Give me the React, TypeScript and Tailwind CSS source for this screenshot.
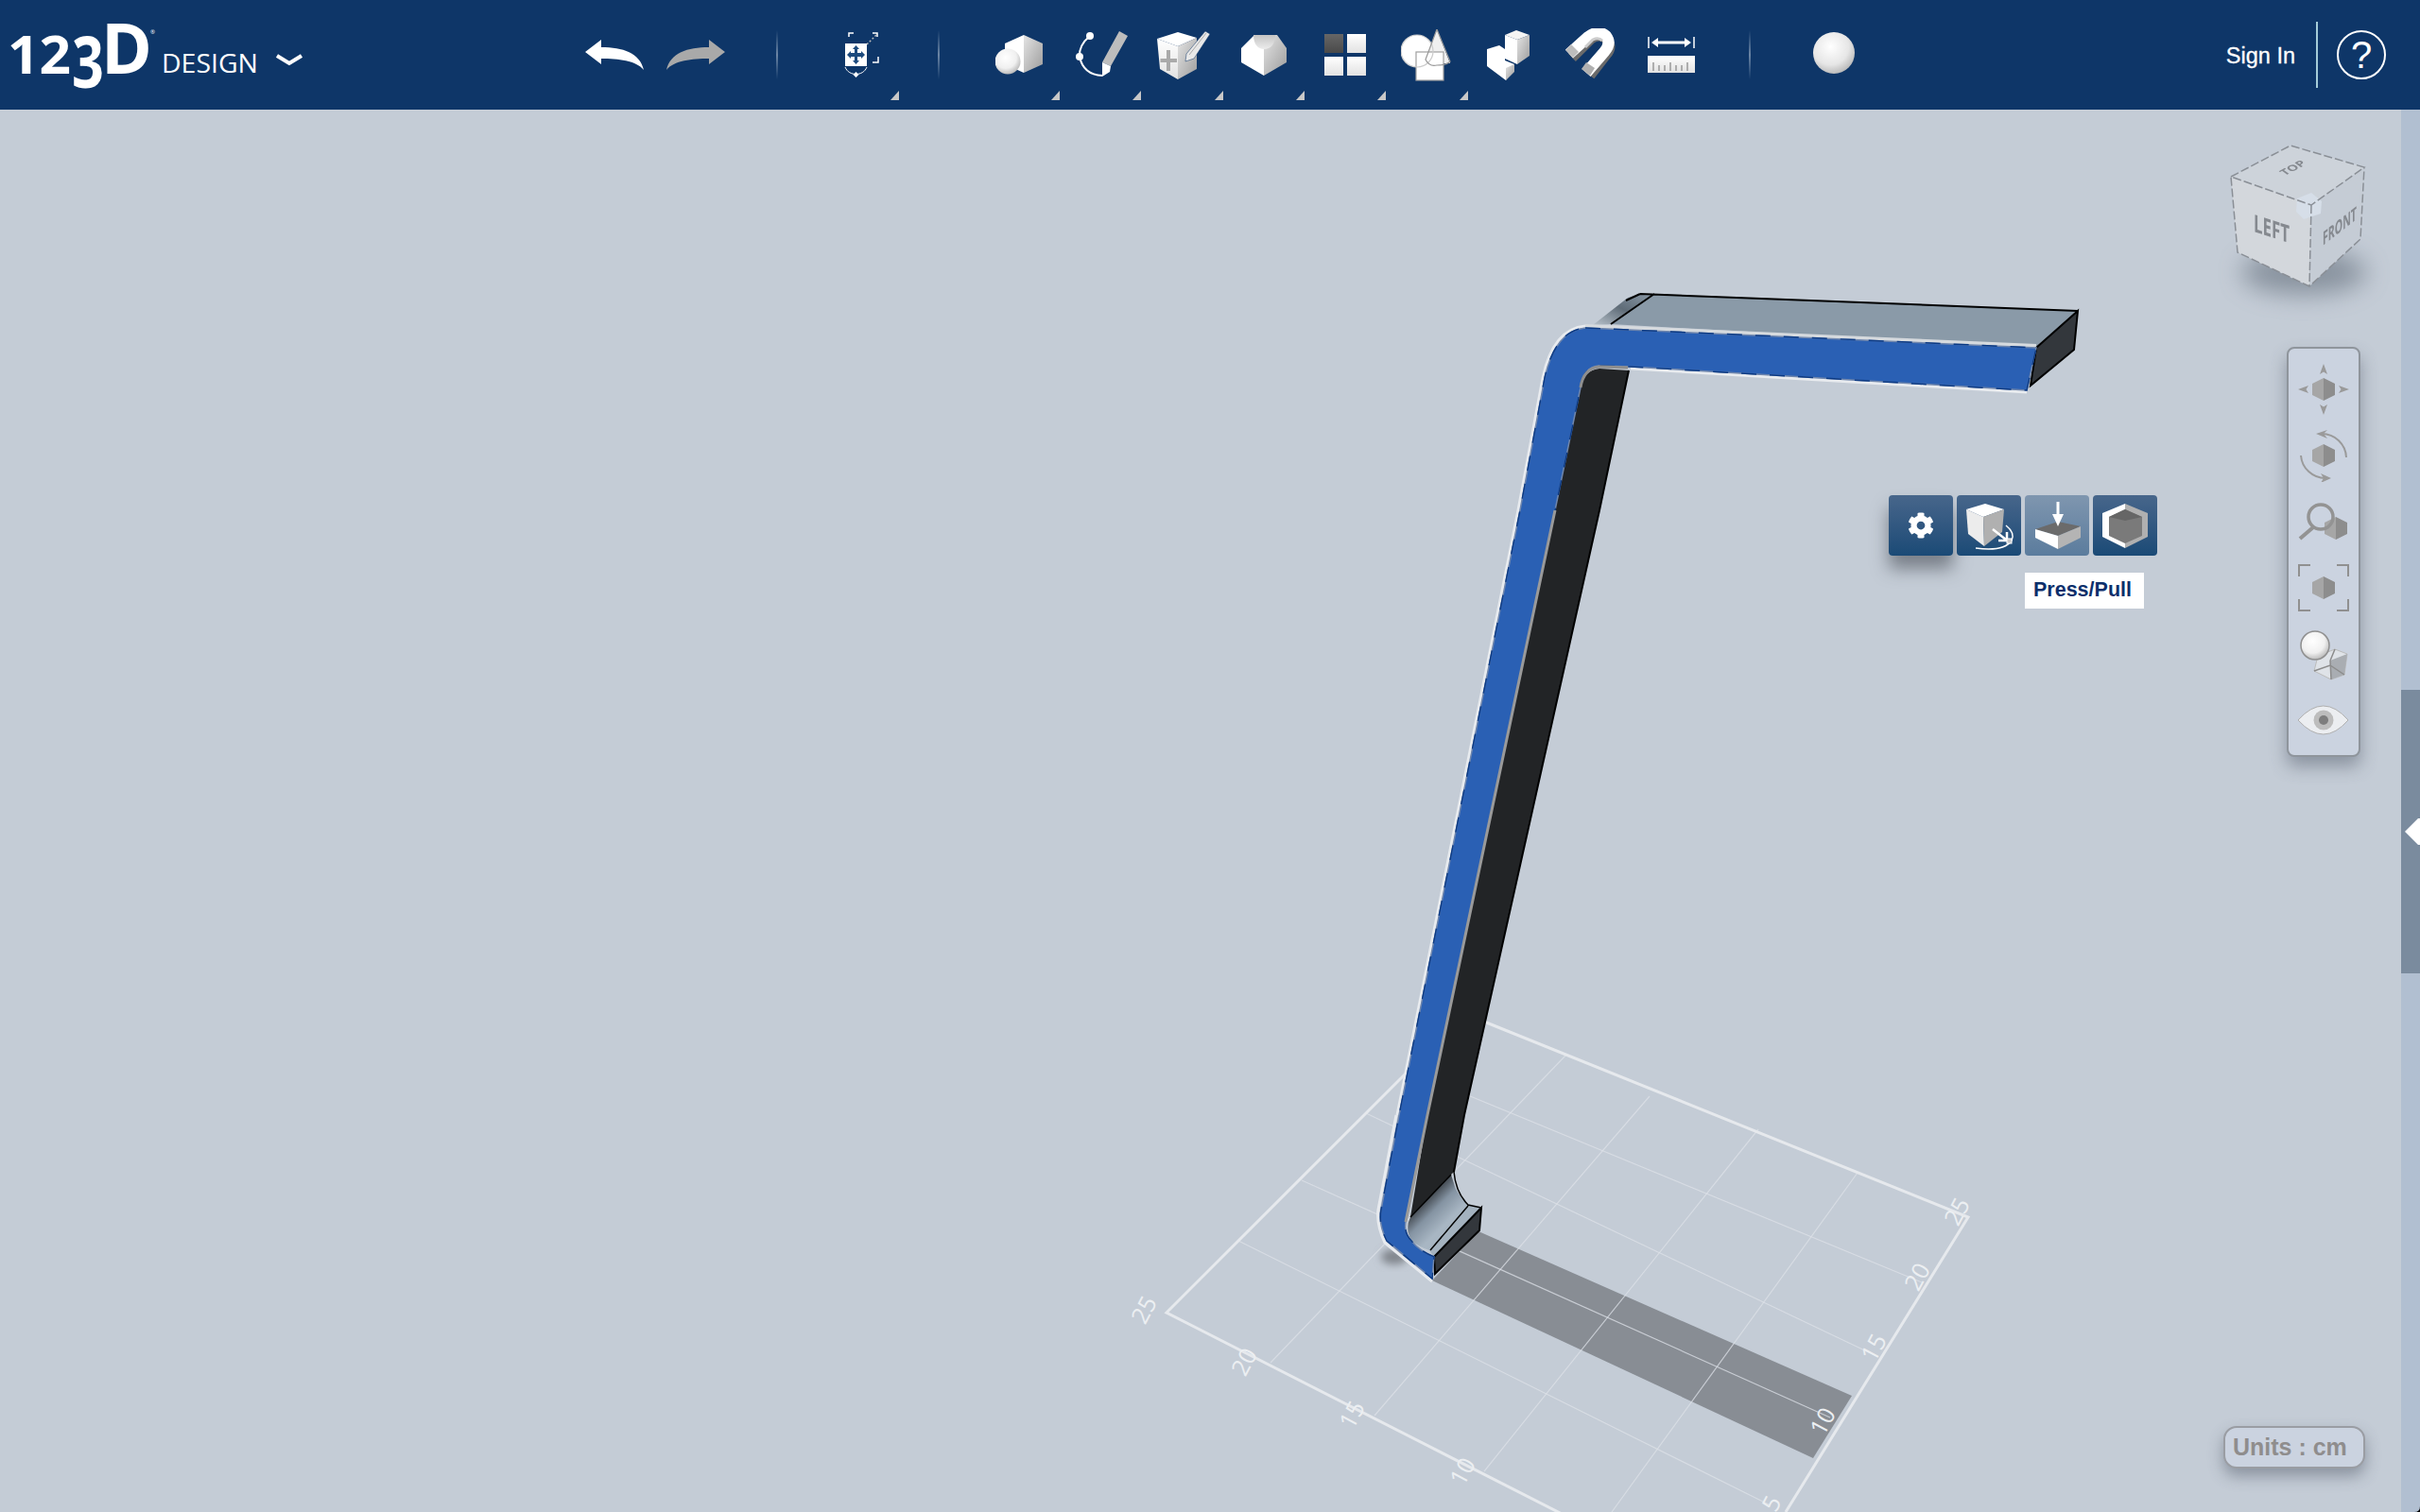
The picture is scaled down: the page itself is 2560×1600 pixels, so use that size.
import React from 'react';
import {FaCog} from 'react-icons/fa';

const SANS = "font-['Liberation_Sans',Arial,sans-serif]";

const GradientDefs = () => (
    <svg className="absolute w-0 h-0">
        <defs>
            <linearGradient id="faceGray" x1="0" y1="0" x2="1" y2="1">
                <stop offset="0" stopColor="#e4e4e4"/>
                <stop offset="1" stopColor="#9c9c9c"/>
            </linearGradient>
            <linearGradient id="faceWhite" x1="0" y1="0" x2="0" y2="1">
                <stop offset="0" stopColor="#ffffff"/>
                <stop offset="1" stopColor="#e2e2e2"/>
            </linearGradient>
            <linearGradient id="faceDark" x1="0" y1="0" x2="0" y2="1">
                <stop offset="0" stopColor="#666666"/>
                <stop offset="1" stopColor="#4a4a4a"/>
            </linearGradient>
            <radialGradient id="ball" cx="0.42" cy="0.35" r="0.7">
                <stop offset="0" stopColor="#ffffff"/>
                <stop offset="0.6" stopColor="#f0f0f0"/>
                <stop offset="1" stopColor="#b0b0b0"/>
            </radialGradient>
            <linearGradient id="scoop" x1="0" y1="0" x2="0" y2="1">
                <stop offset="0" stopColor="#c4c4c4"/>
                <stop offset="1" stopColor="#ececec"/>
            </linearGradient>
            <linearGradient id="bevelTop" x1="0" y1="1" x2="1" y2="0">
                <stop offset="0" stopColor="#b9c3cc"/>
                <stop offset="0.5" stopColor="#5f6c78"/>
                <stop offset="1" stopColor="#8b9aa8"/>
            </linearGradient>
            <linearGradient id="bendFace" gradientUnits="userSpaceOnUse" x1="1506" y1="1266" x2="1532" y2="1292">
                <stop offset="0" stopColor="#2f3338"/>
                <stop offset="0.5" stopColor="#8493a2"/>
                <stop offset="1" stopColor="#a8b6c3"/>
            </linearGradient>
            <filter id="soft" x="-50%" y="-80%" width="200%" height="260%">
                <feGaussianBlur stdDeviation="13"/>
            </filter>
            <filter id="softSmall" x="-50%" y="-50%" width="200%" height="200%">
                <feGaussianBlur stdDeviation="4"/>
            </filter>
        </defs>
    </svg>
);

const Logo = () => (
    <svg width="340" height="116" className="shrink-0 font-['Open_Sans',sans-serif]" fill="#fff">
        <text x="8" y="78" fontSize="56" fontWeight="700" textLength="67" lengthAdjust="spacingAndGlyphs">12</text>
        <text x="0" y="0" fontSize="76" fontWeight="700" transform="translate(76 93) scale(0.78 1)">3</text>
        <text x="107" y="78" fontSize="73" fontWeight="700" textLength="54" lengthAdjust="spacingAndGlyphs">D</text>
        <text x="159" y="36" fontSize="6">®</text>
        <text x="171" y="77" fontSize="28" textLength="102" lengthAdjust="spacingAndGlyphs">DESIGN</text>
        <path d="M293 59l13 8 13-8" fill="none" stroke="#fff" strokeWidth="4"/>
    </svg>
);

const UndoIcon = ({flip, color}: {flip?: boolean; color: string}) => (
    <svg width="62" height="32" viewBox="0 0 62 32" className={flip ? '-scale-x-100' : ''}>
        <path d="M0 13L17 0V8C40 8 58 14 62 32C54 22 35 20 17 20V26Z" fill={color}/>
    </svg>
);

const SelectIcon = () => (
    <svg width="38" height="50" viewBox="0 0 38 50" fill="none">
        <path d="M5 6V2H10M30 2H35V6M30 33H36V27" stroke="#fff" strokeWidth="1.500"/>
        <path d="M24 14L34 4" stroke="#bbb" strokeWidth="1.500" strokeDasharray="2 2"/>
        <rect x="1" y="13" width="23" height="24" fill="#fff"/>
        <path d="M12.500 15l3.500 4h-2v4h4v-2l4 4-4 4v-2h-4v4h2l-3.500 4-3.500-4h2v-4h-4v2l-4-4 4-4v2h4v-4h-2z" fill="#1c4a7d"/>
        <path d="M1 38C5 48 20 48 24 38" stroke="#fff" strokeWidth="1"/>
        <path d="M12.500 43l3 3-3 3-3-3z" fill="#fff"/>
    </svg>
);

const PrimitivesIcon = () => (
    <svg width="50" height="42" viewBox="0 0 50 42">
        <path d="M30 0L10 9V31L30 40Z" fill="#fff"/>
        <path d="M30 0L50 9V31L30 40Z" fill="url(#faceGray)"/>
        <circle cx="13" cy="28" r="13.500" fill="url(#ball)"/>
    </svg>
);

const SketchIcon = () => (
    <svg width="56" height="50" viewBox="0 0 56 50" className="ml-[3px]">
        <path d="M15 5Q3 15 4 27Q8 46 28 47" fill="none" stroke="#fff" strokeWidth="2"/>
        <circle cx="15" cy="5" r="4" fill="#fff"/>
        <circle cx="4" cy="27" r="4" fill="#fff"/>
        <path d="M46 0L55 5L37 37L28 33Z" fill="#bdbdbd"/>
        <path d="M28 33L37 37L36 43L28 48Z" fill="#fff"/>
    </svg>
);

const ConstructIcon = () => (
    <svg width="57" height="52" viewBox="0 0 57 52" className="ml-[4px]">
        <path d="M0 9L22 2L42 8L22 17Z" fill="#fff"/>
        <path d="M0 9L22 17V52L3 41Z" fill="url(#faceWhite)"/>
        <path d="M22 17L42 8V41L22 52Z" fill="url(#faceGray)"/>
        <path d="M10 21H14V30H21V34H14V43H10V34H3.500V30H10Z" fill="#aaa"/>
        <path d="M51 1L56 4L39 30L30 33L31 25Z" fill="#e8e8e8" stroke="#0e3668" strokeWidth="0.500"/>
        <path d="M34 26L52 3" stroke="#aaa" strokeWidth="1"/>
    </svg>
);

const ModifyIcon = () => (
    <svg width="48" height="43" viewBox="0 0 48 43">
        <path d="M0 14L14 0H24V43L0 29Z" fill="#fff"/>
        <path d="M24 0H38L48 14V29L24 43Z" fill="url(#faceGray)"/>
        <path d="M13 0C13 10 18 15 24 15C31 15 36 10 36 0Z" fill="url(#scoop)"/>
    </svg>
);

const PatternIcon = () => (
    <svg width="44" height="44" viewBox="0 0 44 44">
        <rect width="20" height="20" fill="url(#faceDark)"/>
        <rect x="24" width="20" height="20" fill="url(#faceWhite)"/>
        <rect y="24" width="20" height="20" fill="url(#faceWhite)"/>
        <rect x="24" y="24" width="20" height="20" fill="url(#faceWhite)"/>
    </svg>
);

const CombineIcon = () => (
    <svg width="53" height="55" viewBox="0 0 53 55" className="-ml-[3px]">
        <ellipse cx="17" cy="23" rx="17" ry="17" fill="#fff"/>
        <path d="M38 0L52 36H24Z" fill="#f0f0f0"/>
        <rect x="16" y="24" width="29" height="30" fill="#fff"/>
        <g fill="none" stroke="#a0a0a0" strokeWidth="1.200">
            <rect x="16" y="24" width="29" height="30"/>
            <ellipse cx="17" cy="23" rx="17" ry="17" stroke="#ccc"/>
            <path d="M38 0L26 32Q30 40 38 38Q48 38 52 34Z" stroke="#999"/>
        </g>
    </svg>
);

const SeparateIcon = () => (
    <svg width="46" height="53" viewBox="0 0 46 53">
        <path d="M19 5L32 10V36L19 30Z" fill="#fff"/>
        <path d="M19 5L31 0L45 5L32 10Z" fill="#f4f4f4"/>
        <path d="M32 10L45 5V27L32 36Z" fill="url(#faceGray)"/>
        <path d="M0 20L13 16L19 20V32L29 36L20 53L0 38Z" fill="#fff"/>
        <path d="M20 40L29 36V44L20 53Z" fill="url(#faceGray)"/>
    </svg>
);

const SnapIcon = () => (
    <svg width="58" height="56" viewBox="0 0 58 56" fill="none">
        <path d="M10 31L30 11Q40 4 47 12Q53 20 46 28L29 50" stroke="#6a6a6a" strokeWidth="11"/>
        <path d="M7 27L27 9Q38 1 46 8Q52 16 44 25L25 47" stroke="#fff" strokeWidth="12"/>
        <path d="M3 23L11 31L17 25L9 17Z" fill="#bdbdbd"/>
        <path d="M20 43L29 50L34 42L25 36Z" fill="#b0b0b0"/>
        <path d="M24 20L32 12Q38 9 42 13" stroke="#ccc" strokeWidth="3"/>
    </svg>
);

const MeasureIcon = () => (
    <svg width="50" height="38" viewBox="0 0 50 38">
        <path d="M1 0V12M49 0V12" stroke="#fff" strokeWidth="1.500"/>
        <path d="M4 6L11 1V4.500H39V1L46 6L39 11V7.500H11V11Z" fill="#fff"/>
        <rect y="20" width="50" height="18" fill="url(#faceWhite)"/>
        <path d="M6 36V27M12 36V30M18 36V30M24 36V27M30 36V30M36 36V30M42 36V27" stroke="#999" strokeWidth="1.500"/>
    </svg>
);

const Separator = ({className}: {className: string}) => (
    <div className={`w-[2px] h-[52px] shrink-0 bg-gradient-to-b from-transparent via-[#6c86a5] to-transparent ${className}`}/>
);

const ToolButton = ({children, more, moreClass = 'right-0'}: {
    children: React.ReactNode;
    more?: boolean;
    moreClass?: string
}) => (
    <button className="relative w-[86.300px] h-[116px] shrink-0 flex items-center justify-center">
        {children}
        {more && (
            <span
                className={`absolute bottom-[10px] ${moreClass} w-0 h-0 border-l-[9px] border-l-transparent border-b-[10px] border-b-[#c8c8c8]`}/>
        )}
    </button>
);

const Header = () => (
    <header className="h-[116px] w-full shrink-0 bg-[#0e3668] flex items-center">
        <Logo/>
        <div className="ml-[267px] flex items-center">
            <ToolButton><UndoIcon color="#fff"/></ToolButton>
            <ToolButton><UndoIcon flip color="#a9a9a9"/></ToolButton>
        </div>
        <Separator className="ml-[41px]"/>
        <div className="ml-[46px]">
            <ToolButton more moreClass="right-[4px]"><SelectIcon/></ToolButton>
        </div>
        <Separator className="ml-[37px]"/>
        <div className="ml-[41px] flex items-center">
            <ToolButton more><PrimitivesIcon/></ToolButton>
            <ToolButton more><SketchIcon/></ToolButton>
            <ToolButton more><ConstructIcon/></ToolButton>
            <ToolButton more><ModifyIcon/></ToolButton>
            <ToolButton more><PatternIcon/></ToolButton>
            <ToolButton more><CombineIcon/></ToolButton>
            <ToolButton><SeparateIcon/></ToolButton>
            <ToolButton><SnapIcon/></ToolButton>
            <ToolButton><MeasureIcon/></ToolButton>
        </div>
        <Separator className="ml-[38px]"/>
        <div
            className="ml-[66px] mb-[4px] w-[44px] h-[44px] rounded-full bg-[radial-gradient(circle_at_42%_35%,#ffffff_0%,#e6e6e6_50%,#909090_100%)]"/>
        <div className={`ml-auto flex items-center text-white ${SANS}`}>
            <span className="text-[23.500px] leading-none mt-[4px] [-webkit-text-stroke:0.3px_white]">Sign In</span>
            <div className="w-[2px] h-[70px] bg-[#a5cdd9] ml-[22px]"/>
            <div
                className="ml-[20px] mr-[36px] w-[52px] h-[52px] rounded-full border-2 border-white flex items-center justify-center text-[40px] leading-none">?
            </div>
        </div>
    </header>
);

const GRID_LINES = [
    'M1310 1313L1873 1593', 'M1377 1249L1936 1500', 'M1445 1178L1981 1433', 'M1490 1133L2033 1357',
    'M1344 1442L1657 1116', 'M1454 1498L1745 1160', 'M1570 1557L1860 1195', 'M1705 1600L1965 1241',
];

const GRID_LABELS: [string, number, number][] = [
    ['25', 1212, 1387], ['20', 1318, 1442], ['15', 1432, 1498], ['10', 1549, 1558],
    ['25', 2072, 1283], ['20', 2030, 1352], ['15', 1984, 1427], ['10', 1930, 1505], ['5', 1876, 1592],
];

const BLUE_FACE = 'M1677 347L2154 368L2144 413L1725 388L1692 387Q1675 388 1672 410L1645 540L1510 1180L1487 1293Q1485 1305 1493 1313Q1502 1324 1517 1330L1515 1353L1467 1313Q1458 1295 1461 1280L1480 1180L1608 540L1634 400Q1645 350 1677 347Z';

const Scene = () => (
    <svg className="absolute inset-0" width="2540" height="1484" viewBox="0 116 2540 1484">
        {/* ground grid */}
        <path d="M1564 1303L1959 1477L1918 1543L1515 1355Z" fill="#888d94"/>
        <ellipse cx="1475" cy="1330" rx="14" ry="8" fill="#80858c" filter="url(#softSmall)"/>
        <g fill="none" stroke="#dde2e8" strokeOpacity="0.75" strokeWidth="1.200">
            {GRID_LINES.map(d => <path key={d} d={d}/>)}
        </g>
        <g fill="none" stroke="#e6e9ed" strokeWidth="3">
            <path d="M1550 1073L1234 1389L1660 1606"/>
            <path d="M1550 1073L2082 1288L1889 1600"/>
        </g>
        {GRID_LABELS.map(([t, x, y]) => (
            <text key={`${t}${x}`} x={x} y={y} fontSize="25" fill="#eceff2" textAnchor="middle"
                  dominantBaseline="middle" fontFamily="Open Sans, sans-serif"
                  transform={`rotate(-62 ${x} ${y})`}>{t}</text>
        ))}

        {/* lamp */}
        <path d="M1704 343L1750 311L2198 329L2154 368Z" fill="#8a9aa8"/>
        <path d="M1685 344L1722 315L1735 311H1750L1704 343Z" fill="url(#bevelTop)"/>
        <path d="M1735 311L2198 329M1750 311L1704 343M1735 311L1720 318" stroke="#000" strokeWidth="2" fill="none"/>
        <path d="M1677 345L2154 366" stroke="#d6dade" strokeWidth="4"/>
        <path d="M2154 368L2198 329L2194 370L2148 408Z" fill="#33373c" stroke="#000" strokeWidth="2"/>
        <path d="M1692 390L1723 392L1692 540L1549 1180L1538 1240L1535 1243L1492 1288L1510 1180L1645 540L1672 410Q1675 392 1692 390Z"
              fill="#222426"/>
        <path d="M1723 392L1692 540L1549 1180L1538 1240" fill="none" stroke="#000" strokeWidth="2"/>
        <path d="M1535 1243L1538 1252Q1540 1262 1553 1275L1512 1323Q1502 1320 1493 1313Q1486 1300 1492 1288Z"
              fill="url(#bendFace)"/>
        <path d="M1553 1275L1567 1278L1517 1330L1512 1323Z" fill="#a4b2bf"/>
        <path d="M1517 1330L1567 1278L1565 1302L1518 1348Z" fill="#33373c" stroke="#000" strokeWidth="2"/>
        <path d="M1538 1240Q1540 1262 1553 1275L1567 1278M1513 1323L1553 1276M1492 1288L1535 1243" fill="none"
              stroke="#000" strokeWidth="1.500"/>
        <path
            d="M2144 415L1725 390M1477 1180L1458 1280Q1456 1296 1465 1315L1515 1356M1478 1180L1606 540L1632 400Q1643 348 1677 345"
            fill="none" stroke="#e8ebef" strokeWidth="3"/>
        <path d={BLUE_FACE} fill="#2a60b4"/>
        <path d={BLUE_FACE} fill="none" stroke="#6f86ad" strokeWidth="1.500"/>
        <path d={BLUE_FACE} fill="none" stroke="#0b3a85" strokeWidth="1.500" strokeDasharray="16 14"/>
        <path d="M1645 540L1510 1180L1487 1293" fill="none" stroke="#9a9a9a" strokeWidth="3"/>
        <path d="M1672 410Q1675 390 1692 388L1722 389" fill="none" stroke="#8f8f8f" strokeWidth="3"/>
    </svg>
);

const ViewCube = () => (
    <svg width="200" height="220" viewBox="2340 130 200 220" className="absolute left-[2340px] top-[14px]">
        <ellipse cx="2437" cy="288" rx="66" ry="24" fill="#6f7a87" opacity="0.7" filter="url(#soft)"/>
        <g className="blur-[0.7px]">
            <path d="M2360 187L2423 154L2501 177L2445 217Z" fill="#cdd3da"/>
            <path d="M2360 187L2445 217L2443 303L2367 267Z" fill="#d3d7dc"/>
            <path d="M2445 217L2501 177L2497 253L2443 303Z" fill="#c5ccd5"/>
            <path d="M2430 210L2445 204L2456 213L2455 226L2437 232L2429 224Z" fill="#d6dee8"/>
            <path d="M2360 187L2423 154L2501 177L2445 217L2360 187V187L2367 267L2443 303L2497 253L2501 177M2445 217L2443 303"
                  fill="none" stroke="#8a8f96" strokeWidth="1.500" strokeDasharray="9 3"/>
            <g fill="#85898f" fontFamily="Open Sans, sans-serif" fontWeight="700">
                <text fontSize="17" transform="translate(2384 245) matrix(1 0.32 0 1.500 0 0)" textLength="38"
                      lengthAdjust="spacingAndGlyphs">LEFT</text>
                <text fontSize="13" transform="translate(2457 260) matrix(1 -0.78 0 1.500 0 0)" textLength="36"
                      lengthAdjust="spacingAndGlyphs">FRONT</text>
                <text fontSize="13" transform="translate(2417 186) matrix(0.9 -0.48 0.7 0.500 0 0)" textLength="26"
                      lengthAdjust="spacingAndGlyphs">TOP</text>
            </g>
        </g>
    </svg>
);

const NavCube = ({x = 16, y = 16}: {x?: number; y?: number}) => (
    <g transform={`translate(${x} ${y})`}>
        <path d="M12 0L0 6V18L12 24Z" fill="#a6a6a6"/>
        <path d="M12 0L24 6V18L12 24Z" fill="#8d8d8d"/>
    </g>
);

const NavButton = ({children}: {children: React.ReactNode}) => (
    <button className="h-[70px] w-full flex items-center justify-center">
        <svg width="56" height="56" viewBox="0 0 56 56" fill="none">{children}</svg>
    </button>
);

const NavPanel = () => (
    <div
        className="absolute left-[2419px] top-[251px] w-[78px] h-[434px] pt-[8px] rounded-[8px] border-2 border-[#8f959c] bg-[#cbd3e0] shadow-[0_10px_18px_rgba(70,80,95,0.45)] flex flex-col items-center">
        <NavButton>
            <NavCube/>
            <path d="M28 1L32 12L28 9.500L24 12ZM28 55L32 44L28 46.500L24 44ZM1 28L12 24L9.500 28L12 32ZM55 28L44 24L46.500 28L44 32Z"
                  fill="#9a9a9a"/>
        </NavButton>
        <NavButton>
            <NavCube/>
            <path d="M52 30A26 26 0 0 0 26 5M4 28A26 26 0 0 0 30 52" stroke="#9a9a9a" strokeWidth="2"/>
            <path d="M20 5L32 1L28 5L32 10Z" fill="#9a9a9a"/>
            <path d="M36 52L25 47L28 52L25 57Z" fill="#9a9a9a"/>
        </NavButton>
        <NavButton>
            <NavCube x={29} y={23}/>
            <circle cx="25" cy="23" r="13" stroke="#939393" strokeWidth="3.500"/>
            <path d="M17 34L3 46" stroke="#939393" strokeWidth="4"/>
        </NavButton>
        <NavButton>
            <NavCube/>
            <path d="M2 16V4H14M42 4H54V16M2 40V52H14M42 52H54V40" stroke="#909090" strokeWidth="2"/>
        </NavButton>
        <NavButton>
            <path d="M22 30L40 23L53 28L50 50L36 55L18 46Z" fill="#dfe3e8" stroke="#bbb"/>
            <path d="M35 35L53 28L50 50L36 55Z" fill="#a9adb2"/>
            <path d="M35 35L36 55M18 46L35 40L50 50M40 23L35 35" stroke="#8c8c8c" strokeWidth="1.500"/>
            <circle cx="19" cy="19" r="15" fill="url(#ball)" stroke="#8f8f8f" strokeWidth="1.500"/>
        </NavButton>
        <NavButton>
            <path d="M1 28Q28 -2 54 28Q28 58 1 28Z" fill="#eceef1" stroke="#b0b0b0"/>
            <circle cx="28" cy="28" r="10.500" fill="#bdbdbd"/>
            <circle cx="28" cy="28" r="5" fill="#7d7d7d"/>
        </NavButton>
    </div>
);

const PopupButton = ({children, active}: {children: React.ReactNode; active?: boolean}) => (
    <button
        className={`w-[68px] h-[64px] rounded-[4px] flex items-center justify-center bg-gradient-to-b ${active ? 'from-[#7f96af] to-[#5b7c9d]' : 'from-[#47668b] to-[#1a4a76]'}`}>
        {children}
    </button>
);

const PopupToolbar = () => (
    <div className="absolute left-[1998px] top-[408px] flex gap-[4px]">
        <div className="shadow-[0_14px_18px_rgba(60,65,75,0.55)] rounded-[4px]">
            <PopupButton><FaCog className="text-white" size={28}/></PopupButton>
        </div>
        <PopupButton>
            <svg width="68" height="64" viewBox="0 0 68 64" fill="none">
                <path d="M10 15L30 9L50 15L28 23Z" fill="#fff"/>
                <path d="M10 15L28 23L29 54L12 41Z" fill="#ececec"/>
                <path d="M28 23L50 15L48 39L29 54Z" fill="#b0b0b0"/>
                <path d="M20 56Q50 60 58 48Q62 40 52 32" stroke="#fff" strokeWidth="1.500"/>
                <path d="M38 36L52 47M53 39L53 48L44 48" stroke="#fff" strokeWidth="2.500"/>
                <rect x="53" y="46" width="5" height="5" fill="#c8c8c8" stroke="#fff"/>
            </svg>
        </PopupButton>
        <PopupButton active>
            <svg width="68" height="64" viewBox="0 0 68 64">
                <path d="M11 36L35 28L59 33L35 43Z" fill="#6b6b6b"/>
                <path d="M11 36L35 43V57L11 45Z" fill="#fff"/>
                <path d="M35 43L59 33V45L35 57Z" fill="#b4b4b4"/>
                <path d="M33.500 7H36.500V20H41L35 33L29 20H33.500Z" fill="#fff"/>
            </svg>
        </PopupButton>
        <PopupButton>
            <svg width="68" height="64" viewBox="0 0 68 64">
                <path d="M34 9L10 19V44L34 56Z" fill="#fff"/>
                <path d="M34 9L58 19V44L34 56Z" fill="#b0b0b0"/>
                <path d="M34 15L52 23V43L34 51L17 43V23Z" fill="#7a7a7a"/>
                <path d="M34 15L52 23L34 27L17 23Z" fill="#666"/>
            </svg>
        </PopupButton>
    </div>
);

const Tooltip = () => (
    <div
        className={`absolute left-[2142px] top-[490px] w-[126px] h-[38px] bg-white pl-[9px] pb-[2px] flex items-center text-[21.500px] font-bold text-[#0d2f6b] ${SANS}`}>
        Press/Pull
    </div>
);

const UnitsBadge = () => (
    <div
        className={`absolute left-[2352px] top-[1393px] w-[150px] h-[45px] pl-[8px] rounded-[14px] border-2 border-[#9a9da3] bg-[#cbd3e0] shadow-[0_8px_16px_rgba(70,80,95,0.45)] flex items-center text-[25px] font-bold text-[#8f8d8d] ${SANS}`}>
        Units : cm
    </div>
);

const SideRail = () => (
    <div className="w-[20px] shrink-0 flex flex-col bg-[#b1bfd1] relative">
        <div className="h-[614px]"/>
        <div className="h-[300px] bg-[#7a8b9e] flex items-center justify-end">
            <svg width="16" height="28" viewBox="0 0 16 28">
                <path d="M0 14L14 0H16V28H14Z" fill="#fff"/>
            </svg>
        </div>
        <svg width="6" height="6" viewBox="0 0 6 6" className="absolute right-0 bottom-0">
            <path d="M6 0V6H0Q6 6 6 0Z" fill="#000"/>
        </svg>
    </div>
);

export default function App() {
    return (
        <div className="w-full h-screen flex flex-col overflow-hidden bg-[#c4ccd6]">
            <GradientDefs/>
            <Header/>
            <main className="flex-1 flex min-h-0">
                <div className="relative flex-1 overflow-hidden">
                    <Scene/>
                    <ViewCube/>
                    <NavPanel/>
                    <PopupToolbar/>
                    <Tooltip/>
                    <UnitsBadge/>
                </div>
                <SideRail/>
            </main>
        </div>
    );
}
